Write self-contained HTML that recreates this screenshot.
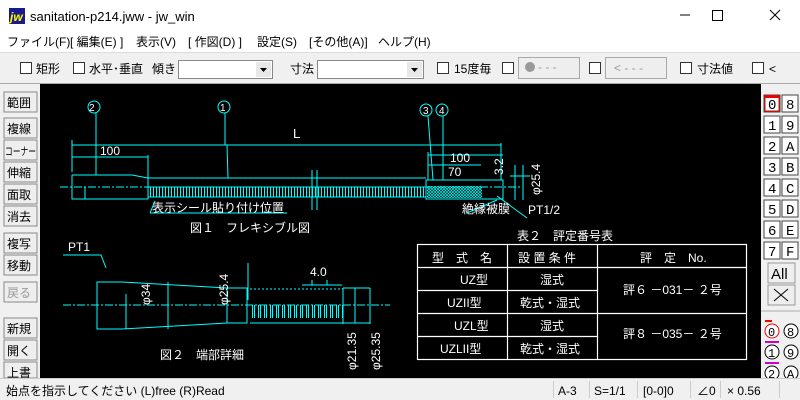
<!DOCTYPE html>
<html><head><meta charset="utf-8"><style>
body{margin:0;width:800px;height:400px;overflow:hidden;background:#f0f0f0;font-family:"Liberation Sans","Noto Sans CJK JP",sans-serif}
svg{display:block}
</style></head><body>
<svg width="800" height="400" xmlns="http://www.w3.org/2000/svg" font-family="Liberation Sans, Noto Sans CJK JP, sans-serif">
<defs>
<pattern id="rib" width="3" height="20" patternUnits="userSpaceOnUse"><line x1="0.5" y1="0" x2="0.5" y2="20" stroke="#0ff" stroke-width="1"/></pattern>
<pattern id="rib2" width="6" height="20" patternUnits="userSpaceOnUse"><line x1="0.5" y1="0" x2="0.5" y2="20" stroke="#0ff" stroke-width="1"/><line x1="2.5" y1="0" x2="2.5" y2="20" stroke="#0ff" stroke-width="1"/></pattern>
<pattern id="hatch" width="3" height="3" patternUnits="userSpaceOnUse"><rect width="3" height="3" fill="#000"/><path d="M0 0l3 3M3 0l-3 3" stroke="#0ff" stroke-width="0.7"/></pattern>
</defs>
<rect x="0" y="0" width="800" height="52" fill="#fff"/>
<rect x="9" y="8" width="16" height="16" fill="#1a1a8a"/><text x="10" y="21" font-size="12" font-style="italic" font-weight="bold" fill="#ff0">jw</text>
<text x="30" y="21" font-size="13" fill="#000">sanitation-p214.jww - jw_win</text>
<g stroke="#000" stroke-width="1" fill="none"><line x1="680" y1="15" x2="690" y2="15"/><rect x="712.5" y="10.5" width="10" height="10"/><line x1="770" y1="10" x2="780" y2="20"/><line x1="780" y1="10" x2="770" y2="20"/></g>
<g font-size="12" fill="#000"><text x="7" y="46">ファイル(F)</text><text x="70" y="46">[ 編集(E) ]</text><text x="136" y="46">表示(V)</text><text x="188" y="46">[ 作図(D) ]</text><text x="257" y="46">設定(S)</text><text x="309" y="46">[その他(A)]</text><text x="378" y="46">ヘルプ(H)</text></g>
<line x1="0" y1="52.5" x2="800" y2="52.5" stroke="#ddd"/>
<g font-size="12" fill="#000" stroke="none">
<rect x="20.5" y="62.5" width="11" height="11" fill="#fff" stroke="#333"/><text x="36" y="73">矩形</text>
<rect x="73.5" y="62.5" width="11" height="11" fill="#fff" stroke="#333"/><text x="89" y="73">水平･垂直</text><text x="152" y="73">傾き</text>
<rect x="178.5" y="60.5" width="94" height="18" fill="#fff" stroke="#888"/><rect x="256" y="62" width="15" height="15" fill="#e8e8e8"/><path d="M260 68h7l-3.5 4z" fill="#000"/>
<text x="290" y="73">寸法</text>
<rect x="317.5" y="60.5" width="106" height="18" fill="#fff" stroke="#888"/><rect x="407" y="62" width="15" height="15" fill="#e8e8e8"/><path d="M411 68h7l-3.5 4z" fill="#000"/>
<rect x="437.5" y="62.5" width="11" height="11" fill="#fff" stroke="#333"/><text x="454" y="73">15度毎</text>
<rect x="502.5" y="62.5" width="11" height="11" fill="#fff" stroke="#333"/>
<rect x="518.5" y="57.5" width="61" height="21" fill="#eee" stroke="#aaa"/><circle cx="530" cy="67" r="5" fill="#999"/><text x="538" y="71" fill="#999">- - -</text>
<rect x="589.5" y="62.5" width="11" height="11" fill="#fff" stroke="#333"/>
<rect x="605.5" y="57.5" width="61" height="21" fill="#eee" stroke="#aaa"/><text x="614" y="72" fill="#999">&lt; - - -</text>
<rect x="680.5" y="62.5" width="11" height="11" fill="#fff" stroke="#333"/><text x="697" y="73">寸法値</text>
<rect x="752.5" y="62.5" width="11" height="11" fill="#fff" stroke="#333"/><text x="769" y="73">&lt;</text>
</g>
<line x1="0" y1="83.5" x2="800" y2="83.5" stroke="#aaa"/>
<rect x="40" y="84" width="721" height="294" fill="#000"/>
<g font-size="12" fill="#000">
<g stroke="#888" fill="#eee">
<rect x="4" y="92" width="33" height="20"/><rect x="4" y="118" width="33" height="20"/><rect x="4" y="140" width="33" height="20"/><rect x="4" y="162" width="33" height="20"/><rect x="4" y="184" width="33" height="20"/><rect x="4" y="206" width="33" height="20"/><rect x="4" y="233" width="33" height="20"/><rect x="4" y="255" width="33" height="20"/><rect x="4" y="282" width="33" height="20"/><rect x="4" y="318" width="33" height="20"/><rect x="4" y="340" width="33" height="20"/><rect x="4" y="362" width="33" height="16"/>
</g>
<text x="7" y="107">範囲</text><text x="7" y="133">複線</text><text x="5" y="155" font-size="11" textLength="31" lengthAdjust="spacingAndGlyphs">コーナー</text><text x="7" y="177">伸縮</text><text x="7" y="199">面取</text><text x="7" y="221">消去</text><text x="7" y="248">複写</text><text x="7" y="270">移動</text><text x="7" y="297" fill="#999">戻る</text><text x="7" y="333">新規</text><text x="7" y="355">開く</text><text x="7" y="377">上書</text>
</g>
<g font-family="Liberation Mono, monospace" font-size="14" fill="#000">
<g stroke="#444" fill="#fff">
<rect x="764" y="95" width="16" height="17"/><rect x="782" y="95" width="16" height="17"/>
<rect x="764" y="116" width="16" height="17"/><rect x="782" y="116" width="16" height="17"/>
<rect x="764" y="137" width="16" height="17"/><rect x="782" y="137" width="16" height="17"/>
<rect x="764" y="158" width="16" height="17"/><rect x="782" y="158" width="16" height="17"/>
<rect x="764" y="179" width="16" height="17"/><rect x="782" y="179" width="16" height="17"/>
<rect x="764" y="200" width="16" height="17"/><rect x="782" y="200" width="16" height="17"/>
<rect x="764" y="221" width="16" height="17"/><rect x="782" y="221" width="16" height="17"/>
<rect x="764" y="242" width="16" height="17"/><rect x="782" y="242" width="16" height="17"/>
</g>
<rect x="765" y="96" width="14" height="15" fill="none" stroke="#e00"/><rect x="765" y="95" width="14" height="3" fill="#e00"/>
<text x="768" y="109">0</text><text x="786" y="109">8</text><text x="768" y="130">1</text><text x="786" y="130">9</text><text x="768" y="151">2</text><text x="786" y="151">A</text><text x="768" y="172">3</text><text x="786" y="172">B</text><text x="768" y="193">4</text><text x="786" y="193">C</text><text x="768" y="214">5</text><text x="786" y="214">D</text><text x="768" y="235">6</text><text x="786" y="235">E</text><text x="768" y="256">7</text><text x="786" y="256">F</text>
<rect x="768" y="263" width="27" height="20" fill="#eee" stroke="#999"/><text x="771" y="279" font-family="Liberation Sans" font-size="15">All</text>
<rect x="768" y="285" width="27" height="20" fill="#eee" stroke="#999"/><path d="M774 289l14 12M788 289l-14 12" stroke="#000"/>
<line x1="761" y1="311" x2="800" y2="311" stroke="#aaa"/>
<circle cx="772" cy="331" r="7" fill="#fff" stroke="#e00"/><rect x="765" y="320" width="7" height="2" fill="#e00"/><text x="768" y="336" font-size="12">0</text>
<circle cx="791" cy="331" r="7" fill="#fff" stroke="#000"/><text x="787" y="336" font-size="12">8</text>
<rect x="765" y="341" width="14" height="2" fill="#c0c"/><circle cx="772" cy="352" r="7" fill="#fff" stroke="#000"/><text x="768" y="357" font-size="12">1</text>
<circle cx="791" cy="352" r="7" fill="#fff" stroke="#000"/><text x="787" y="357" font-size="12">9</text>
<rect x="765" y="362" width="14" height="2" fill="#c0c"/><circle cx="772" cy="373" r="7" fill="#fff" stroke="#000"/><text x="768" y="378" font-size="12">2</text>
<circle cx="791" cy="373" r="7" fill="#fff" stroke="#000"/><text x="787" y="378" font-size="12">A</text>
</g>
<rect x="0" y="378" width="800" height="22" fill="#f0f0f0"/>
<line x1="0" y1="378.5" x2="800" y2="378.5" stroke="#ccc"/>
<g font-size="12" fill="#000"><text x="6" y="395">始点を指示してください (L)free (R)Read</text>
<text x="558" y="395">A-3</text><text x="594" y="395">S=1/1</text><text x="643" y="395">[0-0]0</text><text x="697" y="395">∠0</text><text x="727" y="395">× 0.56</text></g>
<g stroke="#ccc"><line x1="553.5" y1="381" x2="553.5" y2="398"/><line x1="589.5" y1="381" x2="589.5" y2="398"/><line x1="637.5" y1="381" x2="637.5" y2="398"/><line x1="690.5" y1="381" x2="690.5" y2="398"/><line x1="720.5" y1="381" x2="720.5" y2="398"/><line x1="779.5" y1="381" x2="779.5" y2="398"/></g>
<!-- fig1 -->
<rect x="149" y="187" width="277" height="10" fill="url(#rib)"/>
<rect x="427" y="186" width="55" height="12" fill="url(#hatch)"/>
<g stroke="#0ff" fill="none" stroke-width="1">
<circle cx="94" cy="107" r="6"/><circle cx="224" cy="107" r="6"/><circle cx="426" cy="110" r="6"/><circle cx="442" cy="110" r="6"/>
<line x1="96" y1="113" x2="96" y2="175"/><line x1="225" y1="113" x2="225" y2="145"/><line x1="227" y1="145" x2="228" y2="178"/>
<line x1="428" y1="116" x2="433" y2="180"/><line x1="443" y1="116" x2="443" y2="180"/>
<line x1="72" y1="145" x2="501" y2="145"/><line x1="72" y1="157" x2="148" y2="157"/><line x1="72" y1="140" x2="72" y2="172"/><line x1="148" y1="155" x2="148" y2="180"/><line x1="501" y1="143" x2="501" y2="180"/>
<line x1="428" y1="155" x2="503" y2="155"/><line x1="428" y1="165" x2="481" y2="165"/><line x1="428" y1="152" x2="428" y2="180"/>
<path d="M72 175h60l16 3h278M72 175v24h76v-24M85 187v12M148 187h278M148 197h278"/>
<line x1="60" y1="187" x2="520" y2="187" stroke-dasharray="8,2,2,2"/>
<line x1="312" y1="170" x2="312" y2="210"/><line x1="317" y1="170" x2="317" y2="210"/>
<path d="M426 180h77v19h-77z"/>
<path d="M150 213h137M150 213l5-12M497 200l-30 13h-1"/>
<path d="M515 165v35M523 165v35M510 176h20M497 196l30 22"/>
<!-- fig2 -->
<path d="M63 255h38l5 13"/>
<path d="M97 282h25l105 6h20v35h-20l-105 6h-25z"/>
<path d="M126 294v35M227 288v35M227 288v35"/>
<line x1="168" y1="282" x2="168" y2="329"/><line x1="248" y1="263" x2="248" y2="300"/>
<path d="M250 289h93" stroke-dasharray="2,2"/>
<path d="M250 323h93M343 288v36M343 288h27M343 323h27M355 288v35M370 288v36M302 285h40M312 280v5M327 280v5"/>
<line x1="63" y1="305" x2="390" y2="305" stroke-dasharray="8,2,2,2"/>
</g>
<rect x="250" y="305" width="93" height="13" fill="url(#rib2)"/>
<g font-family="Liberation Sans, Noto Sans CJK JP, sans-serif" font-size="11" fill="#fff">
<text x="89" y="111" font-size="10">2</text><text x="220" y="111" font-size="10">1</text><text x="423" y="114" font-size="10">3</text><text x="439" y="114" font-size="10">4</text>
<text x="293" y="138" font-size="13">L</text><text x="100" y="155" font-size="12">100</text>
<text x="450" y="162" font-size="12">100</text><text x="448" y="176" font-size="12">70</text>
<text x="152" y="212" font-size="12">表示シール貼り付け位置</text>
<text x="462" y="213" font-size="12">絶縁被膜</text><text x="528" y="214" font-size="12">PT1/2</text>
<text x="190" y="232" font-size="12">図１　フレキシブル図</text>
<text x="68" y="251" font-size="12">PT1</text>
<text x="310" y="276" font-size="12">4.0</text>
<text x="160" y="359" font-size="12">図２　端部詳細</text>
<text x="517" y="240" font-size="12">表２　評定番号表</text>
<text transform="translate(150,305) rotate(-90)" font-size="12">φ34</text>
<text transform="translate(228,305) rotate(-90)" font-size="12">φ25.4</text>
<text transform="translate(356,370) rotate(-90)" font-size="12">φ21.35</text>
<text transform="translate(380,370) rotate(-90)" font-size="12">φ25.35</text>
<text transform="translate(540,195) rotate(-90)" font-size="12">φ25.4</text>
<text transform="translate(503,175) rotate(-90)" font-size="12">3.2</text>
</g>
<g stroke="#fff" fill="none" stroke-width="1.2">
<rect x="417.5" y="244.5" width="329" height="115"/>
<line x1="417" y1="267.5" x2="746" y2="267.5"/><line x1="417" y1="290.5" x2="597" y2="290.5"/><line x1="417" y1="313.5" x2="746" y2="313.5"/><line x1="417" y1="336.5" x2="597" y2="336.5"/>
<line x1="507.5" y1="244" x2="507.5" y2="360"/><line x1="597.5" y1="244" x2="597.5" y2="360"/>
</g>
<g font-size="12" fill="#fff">
<text x="432" y="262">型　式　名</text><text x="518" y="262">設 置 条 件</text><text x="640" y="262">評　定　No.</text>
<text x="460" y="284">UZ型</text><text x="540" y="284">湿式</text>
<text x="447" y="307">UZII型</text><text x="520" y="307">乾式・湿式</text>
<text x="454" y="330">UZL型</text><text x="540" y="330">湿式</text>
<text x="440" y="353">UZLII型</text><text x="520" y="353">乾式・湿式</text>
<text x="623" y="294">評６ －031－ ２号</text><text x="623" y="338">評８ －035－ ２号</text>
</g>
</svg>
</body></html>
